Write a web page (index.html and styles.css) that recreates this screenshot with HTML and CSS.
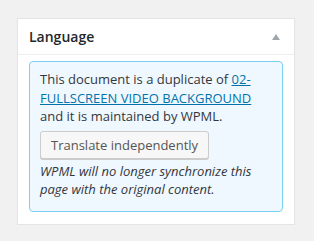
FILE: index.html
```html
<!DOCTYPE html>
<html lang="en">

<head>
    <meta charset="UTF-8">
    <meta name="viewport" content="width=device-width, initial-scale=1.0">
    <title>Language</title>
    <link rel="stylesheet" href="styles.css">
</head>

<body>
    <div class="postbox">
        <div class="postbox-header">
            <h2>Language</h2>
            <span class="toggle-arrow"></span>
        </div>
        <div class="inside">
            <div class="notice">
                <p>This document is a duplicate of <a href="#">02-FULLSCREEN VIDEO BACKGROUND</a> and it is maintained by WPML.</p>
                <button class="button">Translate independently</button>
                <p class="note">WPML will no longer synchronize this page with the original content.</p>
            </div>
        </div>
    </div>
</body>

</html>
```

FILE: styles.css
```css
* {
    box-sizing: border-box;
}

body {
    margin: 0;
    padding: 18px 19px 0 17px;
    background-color: #F1F1F1;
    font-family: 'Open Sans', sans-serif;
    font-size: 13px;
    color: #32373C;
}

.postbox {
    background-color: #FFF;
    border: 1px solid #E5E5E5;
    box-shadow: 0 1px 1px rgba(0, 0, 0, 0.04);
}

.postbox-header {
    display: flex;
    align-items: center;
    justify-content: space-between;
    height: 36px;
    padding: 0 14px 0 11px;
    border-bottom: 1px solid #EEE;
}

.postbox-header h2 {
    margin: 0;
    font-size: 14px;
    font-weight: 600;
    color: #23282D;
}

.toggle-arrow {
    width: 0;
    height: 0;
    border-left: 4px solid transparent;
    border-right: 4px solid transparent;
    border-bottom: 6px solid #A0A5AA;
}

.inside {
    padding: 6px 11px 12px;
}

.notice {
    background-color: #F0F8FF;
    border: 1px solid #7AD0F0;
    border-radius: 4px;
    padding: 8px 10px 12px;
}

.notice p {
    margin: 0;
    line-height: 18.5px;
}

.notice a {
    color: #0073AA;
}

.button {
    display: inline-block;
    margin: 5px 0 3px;
    height: 28px;
    padding: 0 10px;
    font-family: inherit;
    font-size: 13px;
    color: #555;
    background-color: #F7F7F7;
    border: 1px solid #CCC;
    border-radius: 3px;
    box-shadow: 0 1px 0 #CCC;
}

.note {
    font-style: italic;
}
```
